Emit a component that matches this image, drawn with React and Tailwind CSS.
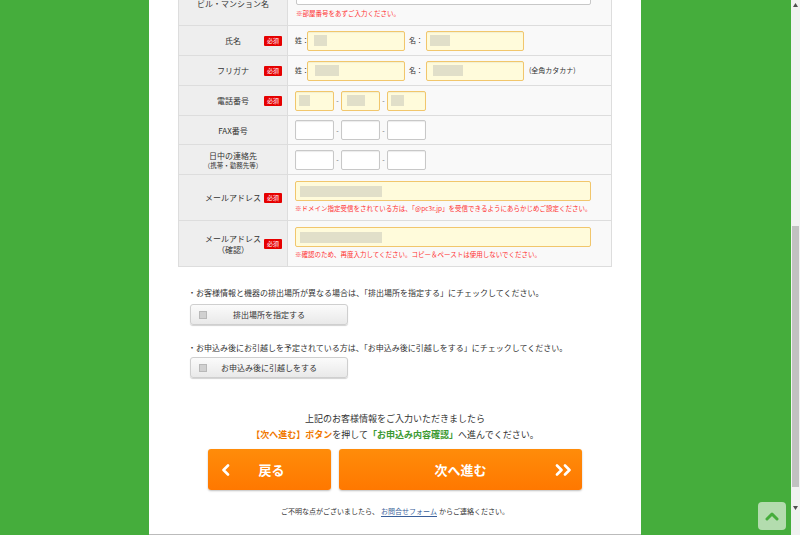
import React from "react";

const F = { fontFamily: '"Noto Sans CJK JP", "Noto Sans", sans-serif' };

function Badge() {
  return (
    <span className="absolute right-[5px] top-1/2 -translate-y-1/2 bg-[#e60000] text-white text-[6px] leading-none px-[3px] py-[2px] rounded-[1px]">
      必須
    </span>
  );
}

function Blur({ w, ml = 5 }) {
  return (
    <span
      className="block h-[11px] bg-[#dedcc6] opacity-90"
      style={{ width: w, marginLeft: ml }}
    />
  );
}

function YInput({ w, blur, bw, ml }) {
  return (
    <div
      className="h-[20px] border border-[#f1c66c] bg-[#fffbdb] rounded-[2px] flex items-center shadow-[inset_0_1px_1px_rgba(0,0,0,0.05)]"
      style={{ width: w }}
    >
      {blur && <Blur w={bw} ml={ml} />}
    </div>
  );
}

function WInput({ w }) {
  return (
    <div
      className="h-[20px] border border-[#c8c8c8] bg-white rounded-[2px] shadow-[inset_0_1px_1px_rgba(0,0,0,0.08)]"
      style={{ width: w }}
    />
  );
}

function Row({ h, label, req, children }) {
  return (
    <div className="grid grid-cols-[109px_1fr] border-b border-[#dddddd]" style={{ height: h }}>
      <div className="relative bg-[#eeeeee] border-r border-[#dddddd] flex items-center justify-center text-center text-[8px] leading-[11px] text-[#333]">
        <div>{label}</div>
        {req && <Badge />}
      </div>
      <div className="bg-[#f9f9f9] pl-[7px] flex items-center text-[7px] text-[#333]">{children}</div>
    </div>
  );
}

function Dash() {
  return <span className="w-[7px] text-center text-[7px] text-[#666]">-</span>;
}

function CheckBtn({ label }) {
  return (
    <div className="relative w-[158px] h-[21px] rounded-[3px] border border-[#cfcfcf] bg-gradient-to-b from-[#fbfbfb] to-[#e9e9e9] shadow-[0_1px_1px_rgba(0,0,0,0.18)] flex items-center justify-center text-[8px] text-[#333]">
      <span className="absolute left-[8px] top-1/2 -translate-y-1/2 w-[8px] h-[8px] bg-[#d0d0d0] border border-[#b8b8b8]" />
      {label}
    </div>
  );
}

export default function App() {
  return (
    <div className="relative w-[800px] h-[535px] overflow-hidden bg-[#45ad3c] flex" style={F}>
      <div className="w-[149px] shrink-0" />
      <div className="w-[492px] shrink-0 bg-white h-[535px] overflow-hidden border-b border-[#bbbbbb]">
        <div className="mx-[29px] border-l border-r border-[#dddddd]">
          {/* top partial row */}
          <div className="grid grid-cols-[109px_1fr] border-b border-[#dddddd] h-[26px]">
            <div className="bg-[#eeeeee] border-r border-[#dddddd] flex justify-center text-[8px] text-[#333] leading-[10px]">
              <span className="mt-[-1px]">ビル・マンション名</span>
            </div>
            <div className="bg-[#f9f9f9] pl-[8px]">
              <div className="w-[295px] h-[20px] mt-[-15px] border border-[#c8c8c8] bg-white rounded-[2px]" />
              <div className="text-[6.5px] text-[#ff3030] mt-[5px] leading-none">※部屋番号をあずご入力ください。</div>
            </div>
          </div>
          <Row h={30} label="氏名" req>
            <span className="w-[12px]">姓：</span>
            <YInput w={98} blur bw={13} ml={6} />
            <span className="w-[21px] text-right pr-[3px]">名：</span>
            <YInput w={98} blur bw={20} ml={3} />
          </Row>
          <Row h={30} label="フリガナ" req>
            <span className="w-[12px]">姓：</span>
            <YInput w={98} blur bw={24} ml={7} />
            <span className="w-[21px] text-right pr-[3px]">名：</span>
            <YInput w={98} blur bw={30} ml={6} />
            <span className="ml-[5px]">(全角カタカナ)</span>
          </Row>
          <Row h={30} label="電話番号" req>
            <YInput w={39} blur bw={11} ml={3} />
            <Dash />
            <YInput w={39} blur bw={18} ml={5} />
            <Dash />
            <YInput w={39} blur bw={13} ml={3} />
          </Row>
          <Row h={29} label="FAX番号">
            <WInput w={39} />
            <Dash />
            <WInput w={39} />
            <Dash />
            <WInput w={39} />
          </Row>
          <Row
            h={30}
            label={
              <>
                <div>日中の連絡先</div>
                <div className="text-[6.5px] leading-[9px]">（携帯・勤務先等）</div>
              </>
            }
          >
            <WInput w={39} />
            <Dash />
            <WInput w={39} />
            <Dash />
            <WInput w={39} />
          </Row>
          <div className="grid grid-cols-[109px_1fr] border-b border-[#dddddd] h-[46px]">
            <div className="relative bg-[#eeeeee] border-r border-[#dddddd] flex items-center justify-center text-[8px] text-[#333]">
              メールアドレス
              <Badge />
            </div>
            <div className="bg-[#f9f9f9] pl-[7px] pt-[6px]">
              <div className="w-[296px] h-[20px] border border-[#f1c66c] bg-[#fffbdb] rounded-[2px] flex items-center">
                <Blur w={82} ml={4} />
              </div>
              <div className="text-[6.5px] text-[#ff3030] mt-[4px] leading-none">
                ※ドメイン指定受信をされている方は、「@pc3r.jp」を受信できるようにあらかじめご設定ください。
              </div>
            </div>
          </div>
          <div className="grid grid-cols-[109px_1fr] border-b border-[#dddddd] h-[46px]">
            <div className="relative bg-[#eeeeee] border-r border-[#dddddd] flex items-center justify-center text-center text-[8px] leading-[11px] text-[#333]">
              <div>
                <div>メールアドレス</div>
                <div>（確認）</div>
              </div>
              <Badge />
            </div>
            <div className="bg-[#f9f9f9] pl-[7px] pt-[6px]">
              <div className="w-[296px] h-[20px] border border-[#f1c66c] bg-[#fffbdb] rounded-[2px] flex items-center">
                <Blur w={82} ml={4} />
              </div>
              <div className="text-[6.5px] text-[#ff3030] mt-[4px] leading-none">
                ※確認のため、再度入力してください。コピー＆ペーストは使用しないでください。
              </div>
            </div>
          </div>
        </div>

        <div className="ml-[39px] mt-[21px] text-[8px] text-[#333] leading-[10px]">
          ・お客様情報と機器の排出場所が異なる場合は、「排出場所を指定する」にチェックしてください。
        </div>
        <div className="ml-[41px] mt-[6px]">
          <CheckBtn label="排出場所を指定する" />
        </div>
        <div className="ml-[39px] mt-[18px] text-[8px] text-[#333] leading-[10px]">
          ・お申込み後にお引越しを予定されている方は、「お申込み後に引越しをする」にチェックしてください。
        </div>
        <div className="ml-[41px] mt-[4px]">
          <CheckBtn label="お申込み後に引越しをする" />
        </div>

        <div className="mt-[33px] text-center text-[9px] leading-[16px] text-[#333]">
          <div>上記のお客様情報をご入力いただきましたら</div>
          <div>
            <span className="text-[#f07800] font-bold">【次へ進む】ボタン</span>を押して
            <span className="text-[#3c9a32] font-bold">「お申込み内容確認」</span>へ進んでください。
          </div>
        </div>

        <div className="flex justify-center gap-[8px] mt-[6px]">
          <div className="relative w-[123px] h-[41px] rounded-[3px] bg-gradient-to-b from-[#ff8c0a] to-[#ff7800] shadow-[0_1px_2px_rgba(0,0,0,0.25)] flex items-center justify-center text-white font-bold text-[13px]">
            <svg className="absolute left-[13px] top-1/2 -translate-y-1/2" width="9" height="12" viewBox="0 0 9 12">
              <polyline points="7,1.5 2.5,6 7,10.5" fill="none" stroke="white" strokeWidth="2.6" strokeLinecap="round" strokeLinejoin="round" />
            </svg>
            <span className="ml-[4px]">戻る</span>
          </div>
          <div className="relative w-[243px] h-[41px] rounded-[3px] bg-gradient-to-b from-[#ff8c0a] to-[#ff7800] shadow-[0_1px_2px_rgba(0,0,0,0.25)] flex items-center justify-center text-white font-bold text-[13px]">
            次へ進む
            <svg className="absolute right-[10px] top-1/2 -translate-y-1/2" width="17" height="12" viewBox="0 0 17 12">
              <polyline points="2,1.5 6.5,6 2,10.5" fill="none" stroke="white" strokeWidth="2.6" strokeLinecap="round" strokeLinejoin="round" />
              <polyline points="10,1.5 14.5,6 10,10.5" fill="none" stroke="white" strokeWidth="2.6" strokeLinecap="round" strokeLinejoin="round" />
            </svg>
          </div>
        </div>

        <div className="mt-[16px] text-center text-[7px] text-[#333] leading-[11px]">
          ご不明な点がございましたら、
          <span className="text-[#3a5f9a] border-b border-[#3a5f9a] mx-[2px]">お問合せフォーム</span>
          からご連絡ください。
        </div>
      </div>
      <div className="w-[150px] shrink-0" />
      <div className="relative w-[9px] shrink-0 bg-[#f1f1f1]">
        <svg className="absolute left-[2px] top-[3px]" width="5" height="4" viewBox="0 0 5 4">
          <polygon points="2.5,0 5,4 0,4" fill="#505050" />
        </svg>
        <div className="absolute left-[1px] right-[1px] top-[226px] h-[261px] bg-[#c1c1c1]" />
        <svg className="absolute left-[2px] top-[506px]" width="5" height="4" viewBox="0 0 5 4">
          <polygon points="0,0 5,0 2.5,4" fill="#505050" />
        </svg>
      </div>

      <div className="absolute left-[758px] top-[502px] w-[28px] h-[28px] rounded-[4px] bg-[#b3dcae] flex items-center justify-center">
        <svg width="14" height="10" viewBox="0 0 14 10">
          <polyline points="2,8 7,3 12,8" fill="none" stroke="#45ad3c" strokeWidth="3" strokeLinecap="round" strokeLinejoin="round" />
        </svg>
      </div>
    </div>
  );
}
